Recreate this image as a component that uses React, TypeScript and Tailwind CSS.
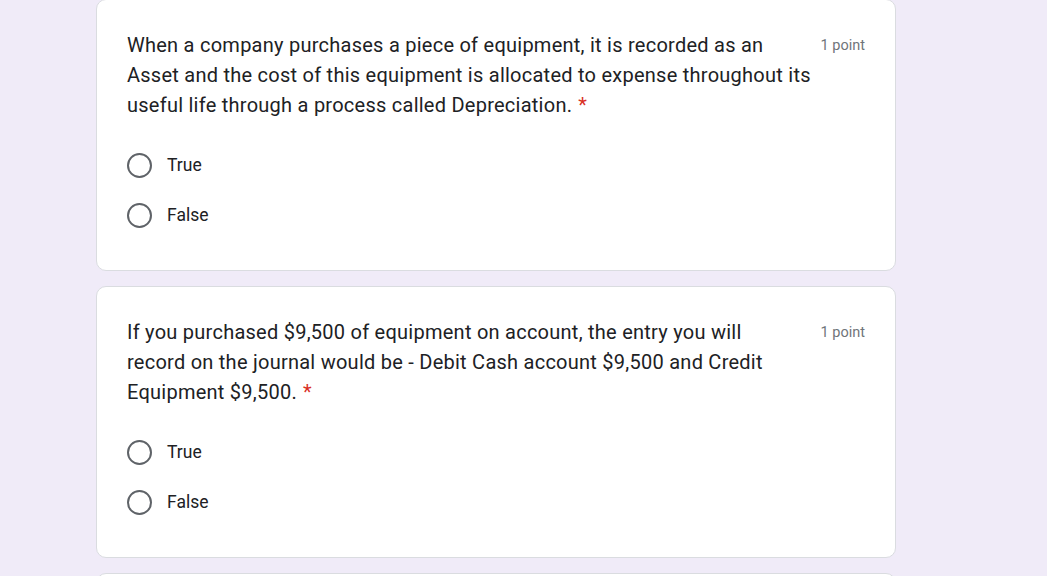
const questions = [
  {
    lines: [
      'When a company purchases a piece of equipment, it is recorded as an',
      'Asset and the cost of this equipment is allocated to expense throughout its',
      'useful life through a process called Depreciation.',
    ],
  },
  {
    lines: [
      'If you purchased $9,500 of equipment on account, the entry you will',
      'record on the journal would be - Debit Cash account $9,500 and Credit',
      'Equipment $9,500.',
    ],
  },
];

function Radio({ label }: { label: string }) {
  return (
    <div className="flex h-[50px] items-center pt-px">
      <span className="h-[25px] w-[25px] shrink-0 rounded-full border-[2.5px] border-[#5f6368]" />
      <span className="ml-[15px] text-[17.5px] text-[#202124] font-['Roboto',sans-serif]">{label}</span>
    </div>
  );
}

function QuestionCard({ lines }: { lines: string[] }) {
  return (
    <div className="rounded-[10px] border border-[#dadce0] bg-white pb-[30px] pl-[30px] pr-[29px] pt-[30px]">
      <div className="flex items-start justify-between">
        <div className="whitespace-nowrap text-[20px] leading-[30px] tracking-[0.25px] text-[#202124] font-['Roboto',sans-serif]">
          {lines.map((l, i) => (
            <div key={i}>
              {l}
              {i === lines.length - 1 && <span className="ml-[6px] text-[#d93025]">*</span>}
            </div>
          ))}
        </div>
        <span className="mr-[1px] mt-[5px] text-[14.5px] leading-[22px] text-[#70757a] font-['Roboto',sans-serif]">1 point</span>
      </div>
      <div className="mt-[20px]">
        <Radio label="True" />
        <Radio label="False" />
      </div>
    </div>
  );
}

export default function App() {
  return (
    <div className="h-[576px] overflow-hidden bg-[#f0ebf8]">
      <div className="-mt-px ml-[96px] flex w-[800px] flex-col gap-[15px]">
        {questions.map((q, i) => (
          <QuestionCard key={i} lines={q.lines} />
        ))}
        <div className="h-[40px] rounded-[10px] border border-[#dadce0] bg-white" />
      </div>
    </div>
  );
}
